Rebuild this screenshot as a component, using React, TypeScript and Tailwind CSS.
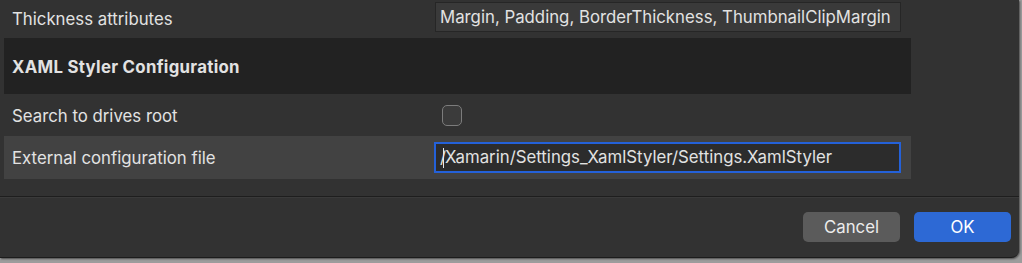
export default function App() {
  return (
    <div className="h-[263px] w-[1022px] overflow-hidden bg-[#9c9c9c] font-['Inter','Liberation_Sans',sans-serif] text-[16.8px] text-[#e2e2e2]">
      <div className="flex h-[258px] w-[1019px] flex-col rounded-br-[8px] border-b border-[#1c1c1c] bg-[#323232] shadow-[1px_1px_2px_rgba(0,0,0,0.5)]">
        <div className="flex h-[38px] items-start pl-[4px] pr-[118px]">
          <span className="w-[431px] pl-[8px] pt-[7px]">Thickness attributes</span>
          <div className="mt-[2px] flex h-[30px] w-[466px] items-center border border-[#262626] bg-[#3a3a3a] pl-[4px] pt-[1px]">
            Margin, Padding, BorderThickness, ThumbnailClipMargin
          </div>
        </div>
        <div className="mx-[4px] flex h-[56px] w-[907px] items-center bg-[#222222] pl-[8px] pt-[3px] font-bold tracking-[0.3px]">
          XAML Styler Configuration
        </div>
        <div className="flex h-[42px] items-center pl-[4px]">
          <span className="w-[438px] pl-[8px] pt-[3px]">Search to drives root</span>
          <div className="h-[21px] w-[20px] rounded-[5px] border border-[#7c7c7c] bg-[#3b3b3b]" />
        </div>
        <div className="mx-[4px] flex h-[43px] w-[907px] items-center bg-[#424242]">
          <span className="w-[430px] pl-[8px] pt-[2px]">External configuration file</span>
          <div className="flex h-[31px] w-[467px] items-center border-2 border-[#2461d9] bg-[#2c2c2c] pl-[4px] pt-[1px]">
            <span>/</span>
            <span className="-ml-[3px] mr-[1px] h-[20px] w-px bg-[#e8e8e8]" />
            <span>Xamarin/Settings_XamlStyler/Settings.XamlStyler</span>
          </div>
        </div>
        <div className="mt-[17px] h-[2px] border-t border-[#1e1e1e] bg-[#3a3a3a]" />
        <div className="mt-[14px] flex justify-end gap-[14px] pr-[8px]">
          <button className="h-[30px] w-[97px] rounded-[5px] bg-[#5b5b5b] pt-[2px] text-[#ececec]">Cancel</button>
          <button className="h-[30px] w-[97px] rounded-[5px] bg-[#2d69d5] pt-[2px] text-white">OK</button>
        </div>
      </div>
    </div>
  );
}
